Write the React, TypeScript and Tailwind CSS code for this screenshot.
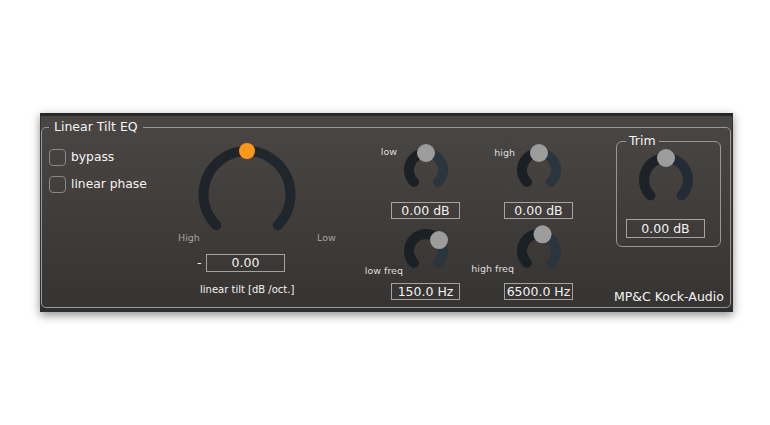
import React from 'react';

interface KnobProps {
  width: number;
  height: number;
  cx: number;
  cy: number;
  r: number;
  stroke: number;
  dotR: number;
  value: number; // angle in degrees from top, -135..135
  fillColor: string;
  restColor: string;
  dotColor: string;
  className?: string;
}

const polar = (cx: number, cy: number, r: number, a: number) => {
  const rad = (a * Math.PI) / 180;
  return [cx + r * Math.sin(rad), cy - r * Math.cos(rad)];
};

const arc = (cx: number, cy: number, r: number, a0: number, a1: number) => {
  const [x0, y0] = polar(cx, cy, r, a0);
  const [x1, y1] = polar(cx, cy, r, a1);
  const large = a1 - a0 > 180 ? 1 : 0;
  return `M ${x0} ${y0} A ${r} ${r} 0 ${large} 1 ${x1} ${y1}`;
};

const Knob: React.FC<KnobProps> = ({
  width,
  height,
  cx,
  cy,
  r,
  stroke,
  dotR,
  value,
  fillColor,
  restColor,
  dotColor,
  className,
}) => {
  const [dx, dy] = polar(cx, cy, r, value);
  return (
    <svg width={width} height={height} viewBox={`0 0 ${width} ${height}`} className={className}>
      {value > -135 && (
        <path d={arc(cx, cy, r, -135, value)} fill="none" stroke={fillColor} strokeWidth={stroke} strokeLinecap="round" />
      )}
      {value < 135 && (
        <path d={arc(cx, cy, r, value, 135)} fill="none" stroke={restColor} strokeWidth={stroke} strokeLinecap="round" />
      )}
      <circle cx={dx} cy={dy} r={dotR} fill={dotColor} />
    </svg>
  );
};

const ValueBox: React.FC<{ text: string; className: string }> = ({ text, className }) => (
  <div className={`border border-[#a3a3a3] text-center text-[12.5px] text-[#f2f2f2] ${className}`}>{text}</div>
);

interface SmallKnobProps {
  label: string;
  labelClass: string;
  holderClass: string;
  value: number;
  box: string;
}

// small knob with a label hanging off its left side
const SmallKnob: React.FC<SmallKnobProps> = ({ label, labelClass, holderClass, value, box }) => (
  <div className="flex w-[69px] flex-col items-center">
    <div className="flex">
      <div className={`flex w-0 justify-end ${holderClass}`}>
        <span className={`whitespace-nowrap text-[9.5px] leading-[12px] text-[#dedede] ${labelClass}`}>{label}</span>
      </div>
      <Knob
        width={52}
        height={52}
        cx={26}
        cy={26}
        r={17}
        stroke={10}
        dotR={9}
        value={value}
        fillColor="#1a2025"
        restColor="#2b353d"
        dotColor="#9c9c9c"
      />
    </div>
    <ValueBox text={box} className="mt-[6px] h-[17px] w-[69px] leading-[15px]" />
  </div>
);

export default function App() {
  return (
    <div className="h-[425px] w-[770px] bg-white pl-[40px] pt-[113px] font-['DejaVu_Sans',sans-serif]">
      <div className="w-[693px] border-x border-b-[4px] border-t-[3px] border-x-[#303030] border-b-[#2c2f31] border-t-[#282828] bg-gradient-to-b from-[#4a4643] to-[#363432] shadow-[0_3px_9px_rgba(0,0,0,0.45)]">
        <fieldset className="mr-[1px] mt-[4px] h-[188px] rounded-[5px] border border-[#979797]">
          <legend className="ml-[7px] px-[5px] text-[12.5px] leading-[14px] text-[#f4f4f4]">Linear Tilt EQ</legend>
          <div className="flex items-start">
            {/* bypass / phase */}
            <div className="ml-[7px] mt-[15px] flex w-[129px] flex-col gap-[10px]">
              <label className="flex items-center gap-[5px] text-[12.3px] leading-[17px] text-[#f4f4f4]">
                <span className="h-[17px] w-[17px] rounded-[4px] border border-[#888]" />
                bypass
              </label>
              <label className="flex items-center gap-[5px] text-[12.3px] leading-[17px] text-[#f4f4f4]">
                <span className="h-[17px] w-[17px] rounded-[4px] border border-[#888]" />
                linear phase
              </label>
            </div>

            {/* tilt knob */}
            <div className="mt-[7px] flex w-[213px] flex-col">
              <div className="flex items-start">
                <span className="mt-[91px] w-[22px] text-[9.5px] leading-[12px] text-[#a4a4a4]">High</span>
                <Knob
                  width={98}
                  height={92}
                  cx={49}
                  cy={53.5}
                  r={43.5}
                  stroke={10}
                  dotR={8}
                  value={0}
                  fillColor="#1e2429"
                  restColor="#1f262c"
                  dotColor="#ff9818"
                  className="ml-[-2.5px]"
                />
                <span className="ml-[21.5px] mt-[91px] text-[9.5px] leading-[12px] text-[#a4a4a4]">Low</span>
              </div>
              <div className="ml-[19px] mt-[10px] flex">
                <span className="w-[9px] text-[12.5px] leading-[18px] text-[#f2f2f2]">-</span>
                <ValueBox text="0.00" className="h-[18px] w-[79px] leading-[16px]" />
              </div>
              <span className="ml-[22px] mt-[12px] text-[10px] leading-[12px] text-[#f2f2f2]">linear tilt [dB /oct.]</span>
            </div>

            {/* band knobs */}
            <div className="mt-[10px] flex flex-col gap-[6px]">
              <div className="flex gap-[44px]">
                <SmallKnob label="low" holderClass="items-start" labelClass="mt-[2px] mr-[2.5px]" value={0} box="0.00 dB" />
                <SmallKnob label="high" holderClass="items-start" labelClass="mt-[3px] mr-[-2.5px]" value={0} box="0.00 dB" />
              </div>
              <div className="flex gap-[44px]">
                <SmallKnob label="low freq" holderClass="items-end" labelClass="mr-[-3.5px]" value={50} box="150.0 Hz" />
                <SmallKnob label="high freq" holderClass="items-end" labelClass="mb-[2px] mr-[-1.5px]" value={12} box="6500.0 Hz" />
              </div>
            </div>

            {/* trim */}
            <div className="ml-[43px] flex flex-col items-start">
              <fieldset className="flex w-[105px] flex-col items-center rounded-[6px] border border-[#979797] pb-[8px] pr-[6px]">
                <legend className="ml-[9px] px-[3px] text-[12.5px] leading-[14px] text-[#f4f4f4]">Trim</legend>
                <Knob
                  width={62}
                  height={62}
                  cx={31}
                  cy={31}
                  r={22}
                  stroke={10}
                  dotR={9}
                  value={0}
                  fillColor="#1c2227"
                  restColor="#232c34"
                  dotColor="#9c9c9c"
                  className="mt-[1px]"
                />
                <ValueBox text="0.00 dB" className="mt-[8px] h-[19px] w-[79px] leading-[17px]" />
              </fieldset>
              <span className="ml-[-2px] mt-[42px] whitespace-nowrap text-[12.5px] leading-[16px] text-[#f4f4f4]">MP&amp;C Kock-Audio</span>
            </div>
          </div>
        </fieldset>
      </div>
    </div>
  );
}
